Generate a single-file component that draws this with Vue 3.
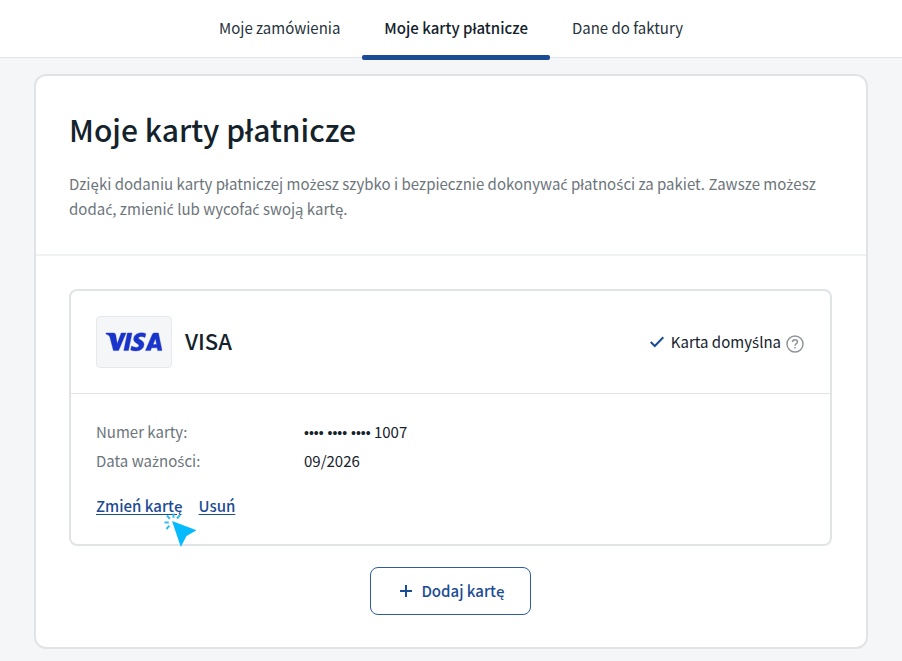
<script setup>
import { h } from 'vue'

const tabs = [
  { label: 'Moje zamówienia', active: false },
  { label: 'Moje karty płatnicze', active: true },
  { label: 'Dane do faktury', active: false },
]

const details = [
  { term: 'Numer karty:', mask: '•••• •••• ••••', value: '1007' },
  { term: 'Data ważności:', value: '09/2026' },
]

const intro =
  'Dzięki dodaniu karty płatniczej możesz szybko i bezpiecznie dokonywać płatności za pakiet. ' +
  'Zawsze możesz dodać, zmienić lub wycofać swoją kartę.'

// The main typeface lacks a few Polish letters; those are set in a companion face.
const Polish = ({ text }) =>
  text.split(/([żźść]+)/i).map((part, i) => (i % 2 ? h('span', { class: 'companion' }, part) : part))
Polish.props = ['text']
</script>

<template>
  <div class="page">
    <nav class="tabs">
      <a
        v-for="tab in tabs"
        :key="tab.label"
        href="#"
        class="tab"
        :class="{ active: tab.active }"
        :aria-current="tab.active ? 'page' : undefined"
      >{{ tab.label }}</a>
    </nav>

    <main class="panel">
      <header class="intro">
        <h1>Moje karty płatnicze</h1>
        <p><Polish :text="intro" /></p>
      </header>

      <div class="content">
        <section class="card">
          <div class="card-head">
            <span class="brand">
              <svg viewBox="0 0 56 18" width="56" height="18" aria-hidden="true">
                <path d="M0 0H7.6Q9.4 0 9.7 1.8L11.2 10.8L15.2 0H20L12.6 17.6H7.4L3.8 3.8Q3.4 2.2 0 1Z" />
                <path d="M21.4 0H26L22.4 17.6H17.8Z" />
                <path d="M39.8.7L39 4.4Q37 3.4 35 3.4Q32.4 3.4 32.4 4.9Q32.4 5.8 34.7 6.9Q38 8.5 38 11.4Q38 14.6 35.5 16.3Q33.4 17.9 30 17.9Q26.8 17.9 24.7 16.9L25.5 13.1Q28 14.4 30.4 14.4Q33 14.4 33 12.7Q33 11.5 31 10.4Q27.6 8.8 27.6 5.9Q27.6 3.1 30 1.4Q32.2-.2 35.4-.2Q38-.2 39.8.7Z" />
                <path fill-rule="evenodd" d="M48.4 0H52.4L56 17.6H51.7L51.2 14.8H45.6L44.5 17.6H39.5L46.3 1.4Q46.9 0 48.4 0ZM49.5 5.4L47 11.5H50.6Z" />
              </svg>
            </span>
            <h2>VISA</h2>
            <div class="default">
              <svg class="check" viewBox="0 0 14 12" width="14" height="12" aria-hidden="true">
                <path d="M.7 6L4.8 10L13.3 1.2" />
              </svg>
              <span><Polish text="Karta domyślna" /></span>
              <button type="button" class="help" aria-label="Karta domyślna">
                <svg viewBox="0 0 18 18" width="18" height="18" aria-hidden="true">
                  <circle cx="9" cy="9" r="8" />
                  <path d="M6.5 7.1Q6.5 4.8 9 4.8Q11.5 4.8 11.5 6.9Q11.5 7.9 10.3 8.7Q9 9.5 9 10.7" />
                  <path d="M9 12.1V13.5" />
                </svg>
              </button>
            </div>
          </div>

          <div class="card-body">
            <dl>
              <div v-for="row in details" :key="row.term" class="row">
                <dt><Polish :text="row.term" /></dt>
                <dd><span v-if="row.mask" class="mask">{{ row.mask }}</span>{{ ' ' + row.value }}</dd>
              </div>
            </dl>
            <div class="actions">
              <a href="#" class="change">Zmień kartę
                <svg class="pointer" viewBox="0 0 34 34" width="34" height="34" aria-hidden="true">
                  <path class="arrow" d="M8 8L32.500 17.200L22.500 23L16.800 34Z" />
                  <path class="rays" d="M9.500 4.800V.5M13 5.500L16 2M5.800 5.800L3 2.500M4.800 9.500H.5M5.300 12.700L2.500 16" />
                </svg>
              </a>
              <a href="#">Usuń</a>
            </div>
          </div>
        </section>

        <button type="button" class="add">
          <svg viewBox="0 0 12 12" width="12" height="12" aria-hidden="true">
            <path d="M6 0V12M0 6H12" />
          </svg>
          Dodaj kartę
        </button>
      </div>
    </main>
  </div>
</template>

<style>
body {
  background: #f5f6f8;
}
</style>

<style scoped>
.page {
  font-family: "Noto Sans CJK SC", "Noto Sans", sans-serif;
  font-size: 15px;
  line-height: 24px;
  color: #14222b;
}

.page :deep(.companion) {
  font-family: "Noto Sans", sans-serif;
  line-height: 1;
}

.tabs {
  display: flex;
  justify-content: center;
  background: #fff;
  border-bottom: 1px solid #e1e4e7;
}

.tab {
  padding: 16px 22px 17px;
  color: #26323a;
  text-decoration: none;
}

.tab.active {
  position: relative;
  color: #14222b;
  font-weight: 500;
}

.tab.active::after {
  content: "";
  position: absolute;
  left: 0;
  right: 0;
  bottom: -3px;
  height: 5px;
  border-radius: 2px;
  background: #1b4c94;
}

.panel {
  margin: 16px 34px 12px;
  background: #fff;
  border: 2px solid #e1e4e7;
  border-radius: 12px;
}

.intro {
  padding: 31px 33px 33px;
  border-bottom: 2px solid #f0f1f3;
}

h1 {
  margin: 0 0 20px;
  font-size: 30px;
  line-height: 44px;
  font-weight: 500;
}

.intro p {
  margin: 0;
  line-height: 25px;
  color: #6c757b;
}

.content {
  display: flex;
  flex-direction: column;
  align-items: center;
  gap: 21px;
  padding: 33px 34px 32px 33px;
}

.card {
  box-sizing: border-box;
  width: 100%;
  border: 2px solid #e1e4e7;
  border-radius: 8px;
}

.card-head {
  display: flex;
  align-items: center;
  gap: 13px;
  padding: 25px;
  border-bottom: 1px solid #e1e4e7;
}

.brand {
  display: flex;
  align-items: center;
  justify-content: center;
  box-sizing: border-box;
  width: 76px;
  height: 52px;
  background: #f5f6f8;
  border: 1px solid #e6e8eb;
  border-radius: 4px;
}

.brand svg {
  overflow: visible;
}

.brand path {
  fill: #1834cb;
  stroke: #1834cb;
  stroke-width: 0.4;
}

h2 {
  margin: 0;
  padding-bottom: 4px;
  font-size: 22px;
  line-height: 32px;
  font-weight: 500;
}

.default {
  display: flex;
  align-items: center;
  gap: 5px;
  margin-left: auto;
  padding-right: 1px;
}

.check {
  margin-right: 2px;
}

.check path {
  fill: none;
  stroke: #1b4c94;
  stroke-width: 2;
}

.help {
  display: flex;
  padding: 4px 0 0;
  border: 0;
  background: none;
}

.help svg {
  fill: none;
  stroke: #8f9498;
  stroke-width: 1.5;
}

.card-body {
  padding: 23px 25px 26px;
}

dl {
  margin: 0 0 19px;
}

.row {
  display: grid;
  grid-template-columns: 208px 1fr;
  line-height: 29px;
}

dt {
  color: #6c757b;
}

dd {
  margin: 0;
}

.mask {
  font-family: "Liberation Sans", sans-serif;
  font-size: 14px;
  line-height: 1;
}

.actions {
  display: flex;
  gap: 16px;
}

.actions a {
  color: #1b4c94;
  font-weight: 500;
  text-underline-offset: 2px;
}

.change {
  position: relative;
}

.pointer {
  position: absolute;
  left: 68px;
  top: 19px;
}

.arrow {
  fill: #05bafd;
}

.rays {
  fill: none;
  stroke: #2fbdf0;
  stroke-width: 2;
}

.add {
  display: flex;
  align-items: center;
  gap: 9px;
  padding: 11px 25px 11px 29px;
  border: 1px solid #2d5ca3;
  border-radius: 8px;
  background: #fff;
  color: #1b4c94;
  font: inherit;
  font-weight: 500;
}

.add path {
  stroke: #1b4c94;
  stroke-width: 2;
}
</style>
